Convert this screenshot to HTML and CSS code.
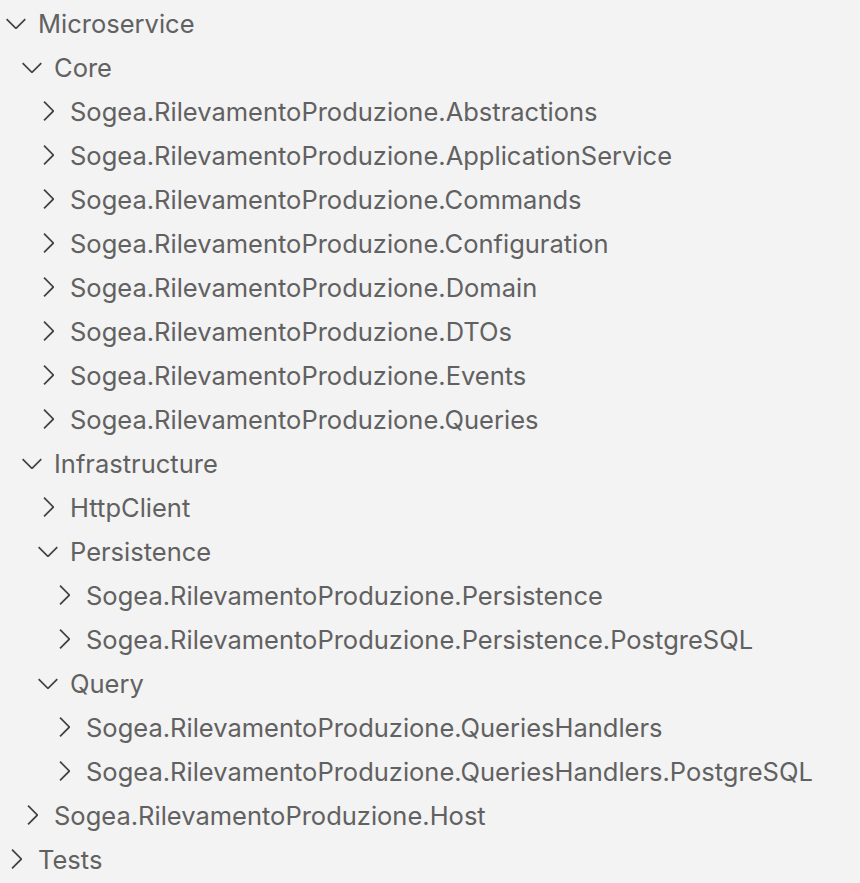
FILE: index.html
```html
<!DOCTYPE html>
<html>
<head>
<meta charset="utf-8">
<link rel="stylesheet" href="styles.css">
</head>
<body>
<div class="tree">
  <div class="row l0"><svg class="tw" viewBox="0 0 16 16"><path d="M7.976 10.072l4.357-4.357.62.618L8.284 11h-.618L3 6.333l.619-.618 4.357 4.357z"/></svg><span class="label">Microservice</span></div>
  <div class="row l1"><svg class="tw" viewBox="0 0 16 16"><path d="M7.976 10.072l4.357-4.357.62.618L8.284 11h-.618L3 6.333l.619-.618 4.357 4.357z"/></svg><span class="label">Core</span></div>
  <div class="row l2"><svg class="tw" viewBox="0 0 16 16"><path d="M10.072 8.024L5.715 3.667l.618-.62L11 7.716v.618L6.333 13l-.618-.619 4.357-4.357z"/></svg><span class="label">Sogea.RilevamentoProduzione.Abstractions</span></div>
  <div class="row l2"><svg class="tw" viewBox="0 0 16 16"><path d="M10.072 8.024L5.715 3.667l.618-.62L11 7.716v.618L6.333 13l-.618-.619 4.357-4.357z"/></svg><span class="label">Sogea.RilevamentoProduzione.ApplicationService</span></div>
  <div class="row l2"><svg class="tw" viewBox="0 0 16 16"><path d="M10.072 8.024L5.715 3.667l.618-.62L11 7.716v.618L6.333 13l-.618-.619 4.357-4.357z"/></svg><span class="label">Sogea.RilevamentoProduzione.Commands</span></div>
  <div class="row l2"><svg class="tw" viewBox="0 0 16 16"><path d="M10.072 8.024L5.715 3.667l.618-.62L11 7.716v.618L6.333 13l-.618-.619 4.357-4.357z"/></svg><span class="label">Sogea.RilevamentoProduzione.Configuration</span></div>
  <div class="row l2"><svg class="tw" viewBox="0 0 16 16"><path d="M10.072 8.024L5.715 3.667l.618-.62L11 7.716v.618L6.333 13l-.618-.619 4.357-4.357z"/></svg><span class="label">Sogea.RilevamentoProduzione.Domain</span></div>
  <div class="row l2"><svg class="tw" viewBox="0 0 16 16"><path d="M10.072 8.024L5.715 3.667l.618-.62L11 7.716v.618L6.333 13l-.618-.619 4.357-4.357z"/></svg><span class="label">Sogea.RilevamentoProduzione.DTOs</span></div>
  <div class="row l2"><svg class="tw" viewBox="0 0 16 16"><path d="M10.072 8.024L5.715 3.667l.618-.62L11 7.716v.618L6.333 13l-.618-.619 4.357-4.357z"/></svg><span class="label">Sogea.RilevamentoProduzione.Events</span></div>
  <div class="row l2"><svg class="tw" viewBox="0 0 16 16"><path d="M10.072 8.024L5.715 3.667l.618-.62L11 7.716v.618L6.333 13l-.618-.619 4.357-4.357z"/></svg><span class="label">Sogea.RilevamentoProduzione.Queries</span></div>
  <div class="row l1"><svg class="tw" viewBox="0 0 16 16"><path d="M7.976 10.072l4.357-4.357.62.618L8.284 11h-.618L3 6.333l.619-.618 4.357 4.357z"/></svg><span class="label">Infrastructure</span></div>
  <div class="row l2"><svg class="tw" viewBox="0 0 16 16"><path d="M10.072 8.024L5.715 3.667l.618-.62L11 7.716v.618L6.333 13l-.618-.619 4.357-4.357z"/></svg><span class="label">HttpClient</span></div>
  <div class="row l2"><svg class="tw" viewBox="0 0 16 16"><path d="M7.976 10.072l4.357-4.357.62.618L8.284 11h-.618L3 6.333l.619-.618 4.357 4.357z"/></svg><span class="label">Persistence</span></div>
  <div class="row l3"><svg class="tw" viewBox="0 0 16 16"><path d="M10.072 8.024L5.715 3.667l.618-.62L11 7.716v.618L6.333 13l-.618-.619 4.357-4.357z"/></svg><span class="label">Sogea.RilevamentoProduzione.Persistence</span></div>
  <div class="row l3"><svg class="tw" viewBox="0 0 16 16"><path d="M10.072 8.024L5.715 3.667l.618-.62L11 7.716v.618L6.333 13l-.618-.619 4.357-4.357z"/></svg><span class="label">Sogea.RilevamentoProduzione.Persistence.PostgreSQL</span></div>
  <div class="row l2"><svg class="tw" viewBox="0 0 16 16"><path d="M7.976 10.072l4.357-4.357.62.618L8.284 11h-.618L3 6.333l.619-.618 4.357 4.357z"/></svg><span class="label">Query</span></div>
  <div class="row l3"><svg class="tw" viewBox="0 0 16 16"><path d="M10.072 8.024L5.715 3.667l.618-.62L11 7.716v.618L6.333 13l-.618-.619 4.357-4.357z"/></svg><span class="label">Sogea.RilevamentoProduzione.QueriesHandlers</span></div>
  <div class="row l3"><svg class="tw" viewBox="0 0 16 16"><path d="M10.072 8.024L5.715 3.667l.618-.62L11 7.716v.618L6.333 13l-.618-.619 4.357-4.357z"/></svg><span class="label">Sogea.RilevamentoProduzione.QueriesHandlers.PostgreSQL</span></div>
  <div class="row l1"><svg class="tw" viewBox="0 0 16 16"><path d="M10.072 8.024L5.715 3.667l.618-.62L11 7.716v.618L6.333 13l-.618-.619 4.357-4.357z"/></svg><span class="label">Sogea.RilevamentoProduzione.Host</span></div>
  <div class="row l0"><svg class="tw" viewBox="0 0 16 16"><path d="M10.072 8.024L5.715 3.667l.618-.62L11 7.716v.618L6.333 13l-.618-.619 4.357-4.357z"/></svg><span class="label">Tests</span></div>
</div>
</body>
</html>
```
FILE: styles.css
```css
html, body {
  margin: 0;
  padding: 0;
  background: #f3f3f3;
}
.tree {
  padding-top: 1px;
  font-family: Inter, "Noto Sans", sans-serif;
  font-size: 25.5px;
  color: #616161;
}
.row {
  height: 44px;
  display: flex;
  align-items: center;
  white-space: nowrap;
}
.tw {
  width: 32px;
  height: 32px;
  fill: #424242;
  flex: none;
  margin-right: 6px;
}
.l0 { padding-left: 0; }
.l1 { padding-left: 16px; }
.l2 { padding-left: 32px; }
.l3 { padding-left: 48px; }
```
